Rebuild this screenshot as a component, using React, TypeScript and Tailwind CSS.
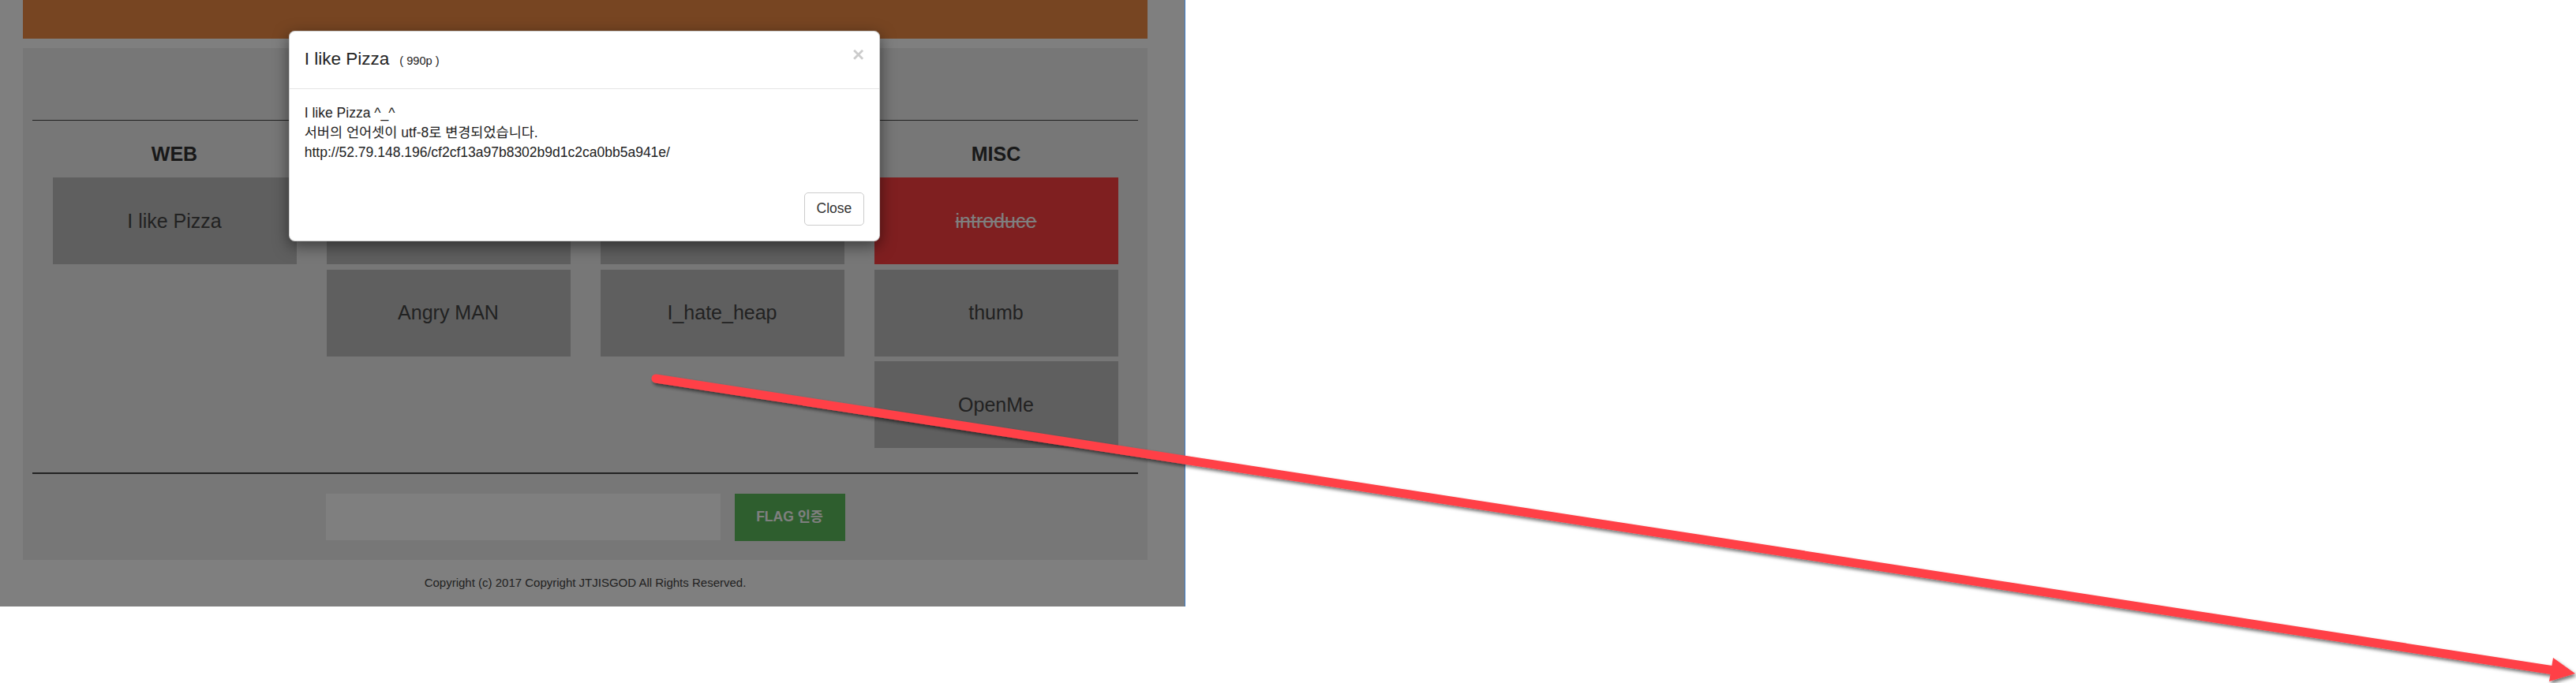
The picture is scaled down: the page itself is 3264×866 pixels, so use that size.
// Column titles and first-row labels of the middle columns sit under the modal, so they stay empty.
const columns = [
  { title: 'WEB', items: [{ name: 'I like Pizza' }] },
  { title: '', items: [{ name: '' }, { name: 'Angry MAN' }] },
  { title: '', items: [{ name: '' }, { name: 'I_hate_heap' }] },
  { title: 'MISC', items: [{ name: 'introduce', solved: true }, { name: 'thumb' }, { name: 'OpenMe' }] },
]

function ChallengeButton({ name, solved }: { name: string; solved?: boolean }) {
  if (solved) {
    return (
      <div className="flex h-[110px] items-center justify-center bg-[#fe3e40] text-[25px] text-white line-through">
        {name}
      </div>
    )
  }
  return (
    <div className="flex h-[110px] items-center justify-center bg-[#bebebe] text-[25px] text-[#444]">
      {name}
    </div>
  )
}

function Modal() {
  return (
    <div className="absolute left-[366px] top-[39px] w-[749px] rounded-[7.5px] border border-black/20 bg-white shadow-[0_6px_19px_rgba(0,0,0,0.5)]">
      {/* header */}
      <div className="flex items-start justify-between border-b border-[#e5e5e5] p-[18.75px]">
        <h4 className="m-0 text-[22.5px] leading-[32px] text-[#222]">
          I like Pizza
          <small className="ml-[13px] text-[14.6px] text-[#222]">( 990p )</small>
        </h4>
        <button className="mt-[-2.5px] text-[26px] font-bold leading-none text-black opacity-20">×</button>
      </div>
      {/* body */}
      <div className="p-[18.75px] text-[17.5px] leading-[25px] text-[#222]">
        <div>I like Pizza ^_^</div>
        <div>서버의 언어셋이 utf-8로 변경되었습니다.</div>
        <div>http://52.79.148.196/cf2cf13a97b8302b9d1c2ca0bb5a941e/</div>
      </div>
      {/* footer */}
      <div className="flex justify-end p-[18.75px]">
        <button className="rounded-[5px] border border-[#ccc] bg-white px-[15px] py-[7.5px] text-[17.5px] leading-[25px] text-[#333]">
          Close
        </button>
      </div>
    </div>
  )
}

function Arrow() {
  return (
    <svg className="pointer-events-none absolute left-0 top-0" width="3264" height="866" viewBox="0 0 3264 866">
      <defs>
        <filter id="arrowShadow" x="-5%" y="-50%" width="110%" height="200%">
          <feDropShadow dx="2" dy="3" stdDeviation="2" floodColor="#000" floodOpacity="0.55" />
        </filter>
      </defs>
      <g filter="url(#arrowShadow)">
        <line x1="831" y1="480" x2="3236" y2="850" stroke="#ff4147" strokeWidth="11" strokeLinecap="round" />
        <polygon points="3263,854 3230,864 3235,834" fill="#ff4147" />
      </g>
    </svg>
  )
}

export default function App() {
  return (
    <div className="relative h-[866px] w-[3264px] overflow-hidden bg-white font-['Liberation_Sans','Noto_Sans_CJK_KR',sans-serif]">
      <div className="h-[769px] w-[1502px] border-r border-[#3d7cc9] bg-white pl-[29px]">
        <div className="h-[49px] w-[1425px] bg-[#ee8a44]" />

        <div className="mt-[12px] h-[649px] w-[1425px] bg-[#eeeeee] px-[12px] pt-[91px]">
          <div className="h-[1.25px] bg-[#444]" />

          <div className="mt-[28px] flex h-[418px] justify-center gap-[38px]">
            {columns.map((col, i) => (
              <div key={i} className="w-[309px]">
                <h3 className="h-[28px] text-center text-[25px] font-bold leading-[28px] text-[#333]">{col.title}</h3>
                <div className="mt-[16px] flex flex-col gap-[6.5px]">
                  {col.items.map((item, j) => (
                    <ChallengeButton key={j} name={item.name} solved={'solved' in item && item.solved} />
                  ))}
                </div>
              </div>
            ))}
          </div>

          <div className="h-[1.25px] bg-[#444]" />

          <div className="mt-[25px] flex items-start justify-center gap-[18px]">
            <input className="h-[59px] w-[500px] bg-white outline-none" />
            <button className="h-[60px] w-[140px] bg-[#5cbc5c] text-[17.5px] font-bold text-white">FLAG 인증</button>
          </div>
        </div>

        <div className="flex h-[59px] w-[1425px] items-center justify-center text-[15px] text-[#444]">
          Copyright (c) 2017 Copyright JTJISGOD All Rights Reserved.
        </div>
      </div>

      {/* modal backdrop */}
      <div className="absolute left-0 top-0 h-[769px] w-[1501px] bg-black/50" />
      <Modal />
      <Arrow />
    </div>
  )
}
